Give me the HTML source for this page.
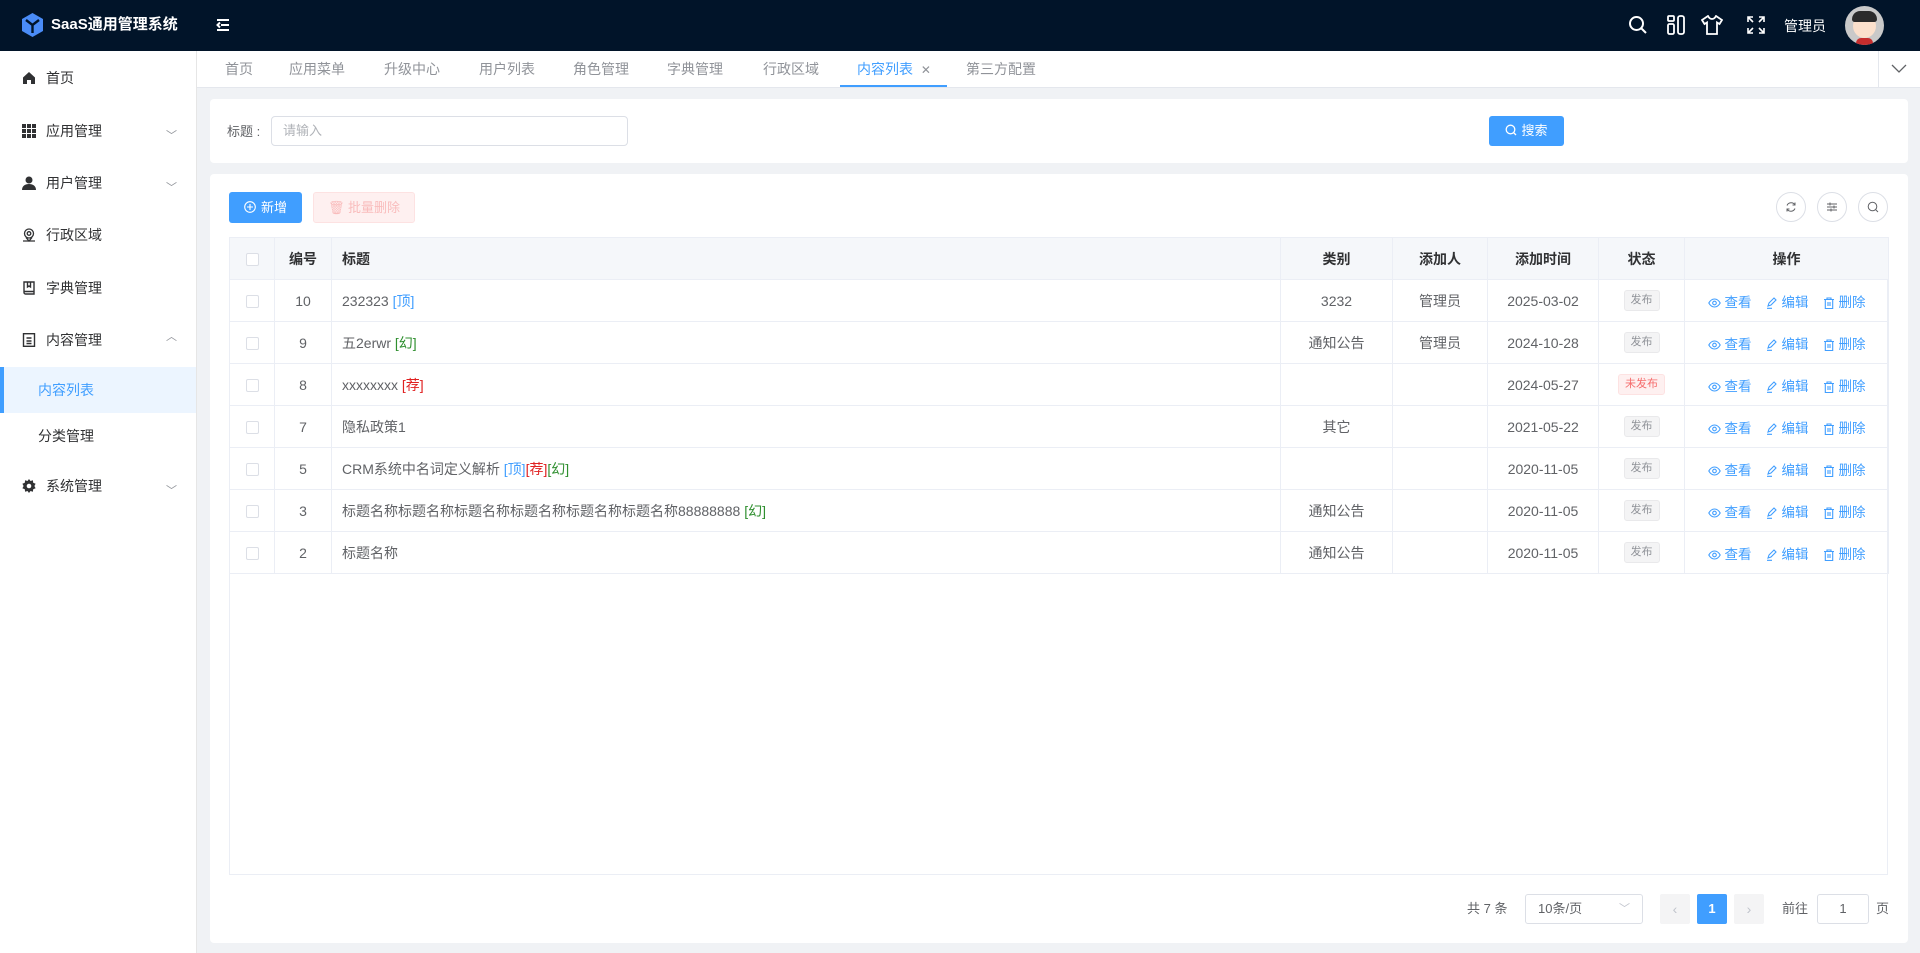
<!DOCTYPE html>
<html><head><meta charset="utf-8"><style>
*{box-sizing:border-box;margin:0;padding:0}
body{width:1920px;height:953px;overflow:hidden;background:#f0f2f5;font-family:"Liberation Sans","Noto Sans CJK SC",sans-serif;font-size:14px;color:#606266;position:relative}
.abs{position:absolute}
.hdr{left:0;top:0;width:1920px;height:51px;background:#011429;color:#fff}
.side{left:0;top:51px;width:197px;height:902px;background:#fff;border-right:1px solid #e6e6e6}
.mi{position:absolute;left:0;width:196px;height:40px;line-height:40px;font-size:14px;color:#303133}
.mi .ic{position:absolute;left:22px;top:13px;width:14px;height:14px}
.mi .t{position:absolute;left:46px}
.mi .ch{position:absolute;left:166px;top:5px;font-size:11px;color:#909399}
.tabs{left:197px;top:51px;width:1723px;height:37px;background:#fff;border-bottom:1px solid #e4e7ed}
.tab{position:absolute;top:0;line-height:37px;font-size:14px;color:#909399}
.card{background:#fff;border-radius:4px}
table{border-collapse:collapse;position:absolute;left:229px;top:237px;width:1659px;font-size:14px;table-layout:fixed}
td,th{border:1px solid #ebeef5;height:42px;text-align:center;color:#606266;font-weight:normal}
th{background:#f5f7fa;color:#303133;font-weight:bold;height:42px}
td.l,th.l{text-align:left;padding-left:10px}
.cb{display:inline-block;width:13px;height:13px;border:1px solid #dcdfe6;border-radius:2px;background:#fff;vertical-align:middle}
.tag{display:inline-block;height:21px;line-height:19px;padding:0 6px;font-size:11px;border-radius:3px;border:1px solid #e9e9eb;background:#f4f4f5;color:#909399}
.tag.r{background:#fef0f0;border-color:#fde2e2;color:#f56c6c}
.op{color:#409eff;margin:0 7px;white-space:nowrap;font-size:13.5px}
.op svg{vertical-align:-2px;margin-right:4px}
.b{color:#409eff}.g{color:#2f8f2f}.rd{color:#e02020}
.cir{position:absolute;top:192px;width:30px;height:30px;border:1px solid #dcdfe6;border-radius:50%;background:#fff}
.cir svg{position:absolute;left:8px;top:8px}
</style></head><body>
<div class="abs hdr">
 <svg class="abs" style="left:22px;top:13px" width="21" height="24" viewBox="0 0 21 24"><path d="M10.5 0L21 6v12l-10.5 6L0 18V6z" fill="#4a8cf7"/><path d="M4 7l6.5 5 6.5-5M10.5 12v8" stroke="#011429" stroke-width="2.4" fill="none"/></svg>
 <div class="abs" style="left:51px;top:14px;font-size:15px;font-weight:bold;line-height:22px">SaaS通用管理系统</div>
 <svg class="abs" style="left:216px;top:18px" width="14" height="14" viewBox="0 0 14 14" stroke="#fff" stroke-width="2"><path d="M1 2h12M5 7h8M1 12h12M4 4.5L1.5 7 4 9.5" fill="none"/></svg>
 <svg class="abs" style="left:1628px;top:15px" width="20" height="20" viewBox="0 0 20 20" fill="none" stroke="#fff" stroke-width="2"><circle cx="8.5" cy="8.5" r="6.5"/><path d="M13.5 13.5L18 18"/></svg>
 <svg class="abs" style="left:1667px;top:15px" width="18" height="20" viewBox="0 0 18 20" fill="none" stroke="#fff" stroke-width="1.8"><rect x="1" y="1" width="6" height="5" rx="1"/><rect x="1" y="9" width="6" height="10" rx="1.5"/><rect x="11" y="1" width="6" height="18" rx="2"/></svg>
 <svg class="abs" style="left:1701px;top:15px" width="22" height="20" viewBox="0 0 22 20" fill="none" stroke="#fff" stroke-width="1.8"><path d="M7 1L1 5l2.5 4 2.5-1.5V19h10V7.5L18.5 9 21 5l-6-4c-1 2-2.5 3-4 3S8 3 7 1z"/></svg>
 <svg class="abs" style="left:1747px;top:16px" width="18" height="18" viewBox="0 0 18 18" fill="none" stroke="#fff" stroke-width="1.6"><path d="M1 6V1h5M1 1l5 5M17 6V1h-5M17 1l-5 5M1 12v5h5M1 17l5-5M17 12v5h-5M17 17l-5-5"/></svg>
 <div class="abs" style="left:1784px;top:16px;font-size:14px;line-height:20px">管理员</div>
 <div class="abs" style="left:1845px;top:6px;width:39px;height:39px;border-radius:50%;background:#c9c9c9;overflow:hidden">
  <div class="abs" style="left:8px;top:8px;width:23px;height:24px;border-radius:50%;background:#fbe0cc"></div>
  <div class="abs" style="left:7px;top:5px;width:25px;height:11px;border-radius:12px 12px 4px 4px;background:#2b2b2b"></div>
  <div class="abs" style="left:11px;top:32px;width:17px;height:10px;border-radius:6px;background:#c62d2d"></div>
 </div>
</div>
<div class="abs side">
 <div class="mi" style="top:7px"><svg class="ic" viewBox="0 0 14 14"><path d="M7 1L1 6.5V13h4V9h4v4h4V6.5z" fill="#303133"/></svg><span class="t">首页</span></div>
 <div class="mi" style="top:60px"><svg class="ic" viewBox="0 0 14 14" fill="#303133"><rect x="0" y="0" width="4" height="4"/><rect x="5" y="0" width="4" height="4"/><rect x="10" y="0" width="4" height="4"/><rect x="0" y="5" width="4" height="4"/><rect x="5" y="5" width="4" height="4"/><rect x="10" y="5" width="4" height="4"/><rect x="0" y="10" width="4" height="4"/><rect x="5" y="10" width="4" height="4"/><rect x="10" y="10" width="4" height="4"/></svg><span class="t">应用管理</span><span class="ch">﹀</span></div>
 <div class="mi" style="top:112px"><svg class="ic" viewBox="0 0 14 14" fill="#303133"><circle cx="7" cy="4" r="3.5"/><path d="M0 14c0-4 3-6 7-6s7 2 7 6z"/></svg><span class="t">用户管理</span><span class="ch">﹀</span></div>
 <div class="mi" style="top:164px"><svg class="ic" viewBox="0 0 14 14" fill="none" stroke="#303133" stroke-width="1.3"><circle cx="7" cy="5.5" r="4.5"/><circle cx="7" cy="5.5" r="1.8"/><path d="M4 9.5L7 13l3-3.5M1 13h12"/></svg><span class="t">行政区域</span></div>
 <div class="mi" style="top:217px"><svg class="ic" viewBox="0 0 14 14" fill="none" stroke="#303133" stroke-width="1.4"><path d="M2 1h10v12H3.5A1.5 1.5 0 012 11.5zM2 10.5h10M5.5 1v5l1.5-1 1.5 1V1"/></svg><span class="t">字典管理</span></div>
 <div class="mi" style="top:269px"><svg class="ic" viewBox="0 0 14 14" fill="none" stroke="#303133" stroke-width="1.4"><rect x="1.5" y="0.7" width="11" height="12.6"/><path d="M4.5 5h5M4.5 8h5M4.5 10.5h5"/></svg><span class="t">内容管理</span><span class="ch" style="top:-3px">︿</span></div>
 <div class="abs" style="left:0;top:316px;width:196px;height:46px;background:#ecf5ff;border-left:4px solid #409eff"></div>
 <div class="mi" style="top:319px;color:#409eff"><span class="t" style="left:38px">内容列表</span></div>
 <div class="mi" style="top:365px"><span class="t" style="left:38px">分类管理</span></div>
 <div class="mi" style="top:415px"><svg class="ic" viewBox="0 0 14 14"><path d="M7 0l1.5 2 2.4-.7.3 2.5 2.4.9-1.2 2.3 1.2 2.3-2.4.9-.3 2.5-2.4-.7L7 14l-1.5-2-2.4.7-.3-2.5L.4 9.3 1.6 7 .4 4.7l2.4-.9.3-2.5 2.4.7z" fill="#303133"/><circle cx="7" cy="7" r="2.3" fill="#fff"/></svg><span class="t">系统管理</span><span class="ch">﹀</span></div>
</div>
<div class="abs tabs">
 <span class="tab" style="left:28px">首页</span><span class="tab" style="left:92px">应用菜单</span><span class="tab" style="left:187px">升级中心</span><span class="tab" style="left:282px">用户列表</span><span class="tab" style="left:376px">角色管理</span><span class="tab" style="left:470px">字典管理</span><span class="tab" style="left:566px">行政区域</span>
 <span class="tab" style="left:660px;color:#409eff">内容列表 <span style="font-size:12px;color:#909399;margin-left:4px">✕</span></span>
 <div class="abs" style="left:643px;top:34px;width:107px;height:2px;background:#409eff"></div>
 <span class="tab" style="left:769px">第三方配置</span>
 <div class="abs" style="left:1681px;top:0;width:42px;height:37px;border-left:1px solid #e4e7ed"></div>
 <svg class="abs" style="left:1694px;top:13px" width="16" height="10" viewBox="0 0 16 10" fill="none" stroke="#606266" stroke-width="1.3"><path d="M1 1l7 7 7-7"/></svg>
</div>
<div class="abs card" style="left:210px;top:99px;width:1698px;height:64px"></div>
<div class="abs" style="left:227px;top:121px;font-size:13px;color:#606266">标题 :</div>
<div class="abs" style="left:271px;top:116px;width:357px;height:30px;border:1px solid #dcdfe6;border-radius:4px;background:#fff;padding-left:11px;line-height:28px;font-size:13px;color:#b0b3b8">请输入</div>
<div class="abs" style="left:1489px;top:116px;width:75px;height:30px;background:#409eff;border-radius:3px;color:#fff;font-size:13px;line-height:30px;text-align:center"><svg width="12" height="12" viewBox="0 0 12 12" fill="none" stroke="#fff" stroke-width="1.3" style="vertical-align:-1px;margin-right:4px"><circle cx="5.5" cy="5.5" r="4.3"/><path d="M8.5 8.5l2.5 2.5"/></svg>搜索</div>
<div class="abs card" style="left:210px;top:174px;width:1698px;height:769px"></div>
<div class="abs" style="left:229px;top:192px;width:73px;height:31px;background:#409eff;border-radius:3px;color:#fff;font-size:13px;line-height:31px;text-align:center"><svg width="12" height="12" viewBox="0 0 12 12" fill="none" stroke="#fff" stroke-width="1.1" style="vertical-align:-1px;margin-right:5px"><circle cx="6" cy="6" r="5.3"/><path d="M6 3v6M3 6h6"/></svg>新增</div>
<div class="abs" style="left:313px;top:192px;width:102px;height:31px;background:#fef0f0;border:1px solid #fde2e2;border-radius:3px;color:#f9bcbc;font-size:13px;line-height:29px;text-align:center">🗑︎ 批量删除</div>
<div class="cir" style="left:1776px"><svg width="12" height="12" viewBox="0 0 12 12" fill="none" stroke="#606266" stroke-width="1"><path d="M10 4A4.5 4.5 0 002 4.5M2 8a4.5 4.5 0 008-.5M10 1.5V4H7.5M2 10.5V8h2.5"/></svg></div>
<div class="cir" style="left:1817px"><svg width="12" height="12" viewBox="0 0 12 12" fill="none" stroke="#606266" stroke-width="1"><path d="M1 3h10M1 6h10M1 9h10M4 1.5v3M8 4.5v3M5 7.5v3"/></svg></div>
<div class="cir" style="left:1858px"><svg width="12" height="12" viewBox="0 0 12 12" fill="none" stroke="#606266" stroke-width="1"><circle cx="5.5" cy="5.5" r="4.3"/><path d="M8.5 8.5l2.5 2.5"/></svg></div>
<div class="abs" style="left:229px;top:237px;width:1659px;height:638px;border:1px solid #ebeef5"></div>
<table>
<colgroup><col style="width:45px"><col style="width:57px"><col style="width:949px"><col style="width:112px"><col style="width:95px"><col style="width:111px"><col style="width:86px"><col style="width:204px"></colgroup>
<tr><th><span class="cb"></span></th><th>编号</th><th class="l">标题</th><th>类别</th><th>添加人</th><th>添加时间</th><th>状态</th><th>操作</th></tr>
<tr><td><span class="cb"></span></td><td>10</td><td class="l">232323 <span class="b">[顶]</span></td><td>3232</td><td>管理员</td><td>2025-03-02</td><td><span class="tag">发布</span></td><td class="ops"></td></tr>
<tr><td><span class="cb"></span></td><td>9</td><td class="l">五2erwr <span class="g">[幻]</span></td><td>通知公告</td><td>管理员</td><td>2024-10-28</td><td><span class="tag">发布</span></td><td class="ops"></td></tr>
<tr><td><span class="cb"></span></td><td>8</td><td class="l">xxxxxxxx <span class="rd">[荐]</span></td><td></td><td></td><td>2024-05-27</td><td><span class="tag r">未发布</span></td><td class="ops"></td></tr>
<tr><td><span class="cb"></span></td><td>7</td><td class="l">隐私政策1</td><td>其它</td><td></td><td>2021-05-22</td><td><span class="tag">发布</span></td><td class="ops"></td></tr>
<tr><td><span class="cb"></span></td><td>5</td><td class="l">CRM系统中名词定义解析 <span class="b">[顶]</span><span class="rd">[荐]</span><span class="g">[幻]</span></td><td></td><td></td><td>2020-11-05</td><td><span class="tag">发布</span></td><td class="ops"></td></tr>
<tr><td><span class="cb"></span></td><td>3</td><td class="l">标题名称标题名称标题名称标题名称标题名称标题名称88888888 <span class="g">[幻]</span></td><td>通知公告</td><td></td><td>2020-11-05</td><td><span class="tag">发布</span></td><td class="ops"></td></tr>
<tr><td><span class="cb"></span></td><td>2</td><td class="l">标题名称</td><td>通知公告</td><td></td><td>2020-11-05</td><td><span class="tag">发布</span></td><td class="ops"></td></tr>
</table>
<script>
var h='<span class="op"><svg width="13" height="12" viewBox="0 0 13 12" fill="none" stroke="#409eff" stroke-width="1.1"><path d="M.8 6C2.5 3 4.5 2 6.5 2s4 1 5.7 4c-1.7 3-3.7 4-5.7 4S2.5 9 .8 6z"/><circle cx="6.5" cy="6" r="1.8"/></svg>查看</span><span class="op"><svg width="12" height="12" viewBox="0 0 12 12" fill="none" stroke="#409eff" stroke-width="1.1"><path d="M2 9l1-3 5-5 2 2-5 5zM1 11.3h5"/></svg>编辑</span><span class="op"><svg width="12" height="12" viewBox="0 0 12 12" fill="none" stroke="#409eff" stroke-width="1.1"><path d="M1 2.5h10M4 2.5V1h4v1.5M2.3 2.5v9h7.4v-9M5 5v4M7 5v4"/></svg>删除</span>';
document.querySelectorAll('.ops').forEach(function(e){e.innerHTML=h});
</script>
<div class="abs" style="left:1467px;top:900px;font-size:13px;line-height:18px">共 7 条</div>
<div class="abs" style="left:1525px;top:894px;width:118px;height:30px;border:1px solid #dcdfe6;border-radius:3px;background:#fff;line-height:28px;padding-left:12px;font-size:13px">10条/页<span style="position:absolute;right:12px;top:0;color:#c0c4cc;font-size:11px">﹀</span></div>
<div class="abs" style="left:1660px;top:894px;width:30px;height:30px;background:#f4f4f5;border-radius:2px;color:#c0c4cc;text-align:center;line-height:30px">‹</div>
<div class="abs" style="left:1697px;top:894px;width:30px;height:30px;background:#409eff;border-radius:2px;color:#fff;text-align:center;line-height:30px;font-weight:bold;font-size:13px">1</div>
<div class="abs" style="left:1734px;top:894px;width:30px;height:30px;background:#f4f4f5;border-radius:2px;color:#c0c4cc;text-align:center;line-height:30px">›</div>
<div class="abs" style="left:1782px;top:900px;font-size:13px;line-height:18px">前往</div>
<div class="abs" style="left:1817px;top:894px;width:52px;height:30px;border:1px solid #dcdfe6;border-radius:3px;background:#fff;text-align:center;line-height:28px;font-size:13px">1</div>
<div class="abs" style="left:1876px;top:900px;font-size:13px;line-height:18px">页</div>
</body></html>
